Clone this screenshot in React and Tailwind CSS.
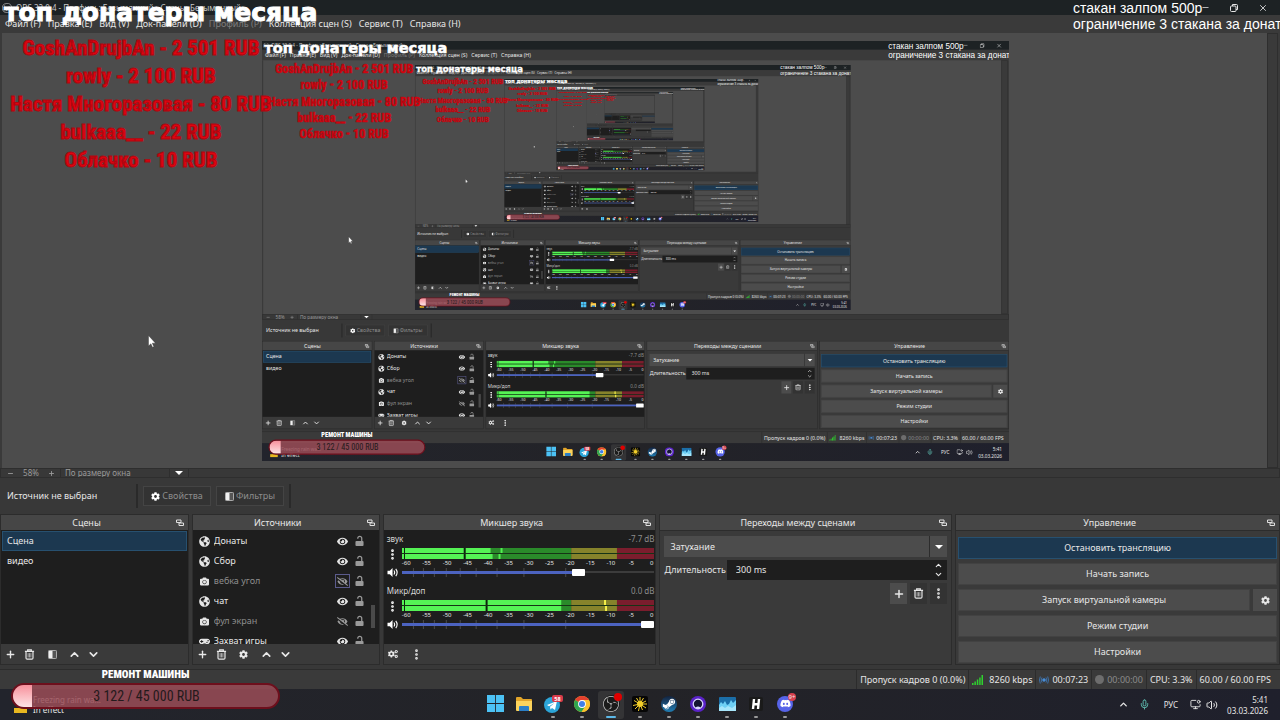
import { FaCamera, FaCog, FaCogs, FaDiscord, FaEye, FaEyeSlash, FaGamepad, FaGlobeAmericas, FaSteamSymbol } from 'react-icons/fa'
import { SiObsstudio } from 'react-icons/si'
import { ChevronDown, ChevronUp, Mic, MonitorDot, MoreVertical, Plus, Minus, Volume2, X } from 'lucide-react'

const MENU = [
  { label: 'Файл (F)' },
  { label: 'Правка (E)' },
  { label: 'Вид (V)' },
  { label: 'Док-панели (D)' },
  { label: 'Профиль (P)', disabled: true },
  { label: 'Коллекция сцен (S)' },
  { label: 'Сервис (T)' },
  { label: 'Справка (H)' },
]

const DONORS = [
  'GoshAnDrujbAn - 2 501 RUB',
  'rowly - 2 100 RUB',
  'Настя Многоразовая - 80 RUB',
  'bulkaaa__ - 22 RUB',
  'Облачко - 10 RUB',
]

const SOURCES = [
  { name: 'Донаты', icon: FaGlobeAmericas, visible: true },
  { name: 'Сбор', icon: FaGlobeAmericas, visible: true },
  { name: 'вебка угол', icon: FaCamera, visible: false, focused: true },
  { name: 'чат', icon: FaGlobeAmericas, visible: true },
  { name: 'фул экран', icon: FaCamera, visible: false },
  { name: 'Захват игры', icon: FaGamepad, visible: true },
]

const CHANNELS = [
  { name: 'звук', db: '-7.7 dB', lit: [89, 91], marks: [62], peaks: [[99, 0, '#52f152'], [97, 6, '#52f152']], volume: 71 },
  { name: 'Микр/доп', db: '0.0 dB', lit: [160, 160], marks: [84], peaks: [[203, 0, '#f4f04a'], [204, 6, '#f4f04a']], volume: 100 },
]

const DB_LABELS = [-60, -55, -50, -45, -40, -35, -30, -25, -20, -15, -10, -5, 0]
const SLIDER_TICKS = [11, 21, 32, 44, 58, 74, 95, 122, 164]

const MAX_DEPTH = 6

function TrashIcon({ className = 'size-[11px]' }) {
  return (
    <svg viewBox="0 0 12 12" className={className} fill="none" stroke="currentColor">
      <path d="M1 2.5h10M4 2V1h4v1" strokeWidth="1.3" />
      <path d="M2.2 3v6.8q0 1.2 1.2 1.2h5.2q1.2 0 1.2-1.2V3" strokeWidth="1.3" />
      <path d="M4.5 4.5v4.7M6 4.5v4.7M7.500 4.5v4.7" strokeWidth="1" opacity=".7" />
    </svg>
  )
}

function FilterIcon() {
  return (
    <svg viewBox="0 0 10 10" className="size-[9px] shrink-0">
      <rect x=".5" y=".5" width="9" height="9" rx="1" fill="#555" stroke="#bbb" />
      <rect x="1" y="1" width="4" height="8" fill="#f0f0f0" />
    </svg>
  )
}

function LockIcon() {
  return (
    <svg viewBox="0 0 10 12" className="h-[12px] w-[9px] text-[#9a9a9a]">
      <rect x="0.500" y="6" width="9" height="5.500" rx="1" fill="currentColor" />
      <path d="M7.500 6V3a2.200 2.200 0 0 0-4.400 0v.6" fill="none" stroke="currentColor" strokeWidth="1.400" />
    </svg>
  )
}

function FloatIcon() {
  return (
    <svg viewBox="0 0 8 8" className="size-[8px]" fill="none" stroke="#e0e0e0">
      <path d="M.5 3.500V1h4.500v2.500z" />
      <path d="M3 6.500V4h4.500v2.500z" fill="#464646" />
    </svg>
  )
}

function SpeakerIcon() {
  return (
    <svg viewBox="0 0 13 12" className="h-[11px] w-[12px]" fill="none" stroke="white" strokeWidth="1.200">
      <path d="M.5 4v4h2.500l3 3V1L3 4z" fill="white" stroke="none" />
      <path d="M7.500 3.800q1.600 2.200 0 4.400M9.500 2q3 4 0 8" />
    </svg>
  )
}

function IconButton({ label, children }) {
  return (
    <button aria-label={label} className="flex size-[11px] items-center justify-center text-[#e8e8e8]">
      {children}
    </button>
  )
}

function Dock({ title, children, footer }) {
  return (
    <section className="flex min-w-0 flex-col border border-[#2c2c2c] bg-[#3a3a3a]">
      <header className="grid h-[15px] shrink-0 grid-cols-[1fr_16px] items-center bg-[#464646]">
        <h2 className="text-center">{title}</h2>
        <button aria-label="Открепить" className="flex justify-center">
          <FloatIcon />
        </button>
      </header>
      {children}
      {footer && <footer className="flex h-5 shrink-0 items-center px-[4px]">{footer}</footer>}
    </section>
  )
}

function ListButtons({ middle }) {
  return (
    <div className="flex items-center gap-2">
      <IconButton label="Добавить"><Plus size={11} strokeWidth={3} /></IconButton>
      <IconButton label="Удалить"><TrashIcon /></IconButton>
      <span className="flex w-[18px] justify-center">{middle}</span>
      <IconButton label="Выше"><ChevronUp className="size-[13px] shrink-0" strokeWidth={3} /></IconButton>
      <IconButton label="Ниже"><ChevronDown className="size-[13px] shrink-0" strokeWidth={3} /></IconButton>
    </div>
  )
}

function SceneDock() {
  return (
    <Dock
      title="Сцены"
      footer={<ListButtons middle={<IconButton label="Фильтры сцены"><FilterIcon /></IconButton>} />}
    >
      <ul className="min-h-0 flex-1 bg-[#1e1e1e] px-px pt-px">
        <li className="flex h-5 items-center border border-[#27506f] bg-[#1c3850] px-1">Сцена</li>
        <li className="flex h-5 items-center px-[5px]">видео</li>
      </ul>
    </Dock>
  )
}

function SourceDock() {
  return (
    <Dock
      title="Источники"
      footer={<ListButtons middle={<IconButton label="Свойства источника"><FaCog size={9} /></IconButton>} />}
    >
      <div className="flex min-h-0 flex-1 overflow-hidden bg-[#1e1e1e]">
        <ul className="min-w-0 flex-1 pt-px pl-[6px]">
          {SOURCES.map(({ name, icon: Icon, visible, focused }) => (
            <li key={name} className="flex h-5 items-center">
              <Icon className={Icon === FaCamera ? 'mx-px size-[9px]' : 'size-[11px]'} />
              <span className={visible ? 'ml-[4px] flex-1 truncate' : 'ml-[4px] flex-1 truncate text-[#8d8d8d]'}>
                {name}
              </span>
              <button
                aria-label="Видимость"
                className={
                  focused
                    ? 'flex h-[14px] w-[15px] items-center justify-center border border-[#5b5b8c] text-[#9a9a9a]'
                    : 'flex h-[14px] w-[15px] items-center justify-center'
                }
              >
                {visible ? <FaEye size={11} /> : <FaEyeSlash size={11} className="text-[#9a9a9a]" />}
              </button>
              <button aria-label="Блокировка" className="ml-[5px]">
                <LockIcon />
              </button>
            </li>
          ))}
        </ul>
        <div className="flex w-[15px] flex-col items-center justify-end pr-px pb-4 pl-1">
          <div className="h-[23px] w-1 bg-[#4a4a4a]" />
        </div>
      </div>
    </Dock>
  )
}

function Meter({ lit, marks, peaks }) {
  return (
    <svg viewBox="0 0 254 11" preserveAspectRatio="none" className="block h-[11px] w-full">
      {lit.map((end, i) => (
        <g key={i}>
          <rect x="0" y={i * 6} width="170" height="5" fill="#2a8a2a" />
          <rect x="170" y={i * 6} width="46" height="5" fill="#86832b" />
          <rect x="216" y={i * 6} width="38" height="5" fill="#7b1d2d" />
          <rect x="0" y={i * 6} width={end} height="5" fill="#55f355" />
        </g>
      ))}
      {peaks.map(([x, y, fill]) => (
        <rect key={x} x={x} y={y} width="2" height="5" fill={fill} />
      ))}
      {marks.map((x) => (
        <rect key={x} x={x} y="0" width="2" height="11" fill="#0d200d" />
      ))}
      <rect x="2" y="0" width="1" height="11" fill="#0d200d" />
      <rect x="0" y="5" width="254" height="1" fill="#143a14" opacity=".8" />
    </svg>
  )
}

function Channel({ channel }) {
  return (
    <div className="flex h-[52px] shrink-0 flex-col">
      <div className="flex h-[18px] items-center justify-between text-[8px]">
        <span className="text-[#d8d8d8]">{channel.name}</span>
        <span className="text-[8px] text-[#8d8d8d]">{channel.db}</span>
      </div>
      <div className="grid grid-cols-[15px_1fr]">
        <button aria-label="Меню канала" className="flex items-start">
          <MoreVertical className="-ml-px size-[13px] text-white" strokeWidth={3} />
        </button>
        <div className="h-[19px]">
          <Meter {...channel} />
          <div className="-mr-[2px] flex h-2 items-center justify-between text-[6px] leading-[8px] text-[#e4e4e4]">
            {DB_LABELS.map((db) => (
              <span key={db} className="flex w-[9px] justify-center">{db}</span>
            ))}
          </div>
        </div>
        <button aria-label="Без звука">
          <SpeakerIcon />
        </button>
        <div className="grid h-[11px] items-center">
          <svg viewBox="0 0 254 11" preserveAspectRatio="none" className="col-start-1 row-start-1 h-[11px] w-full">
            {SLIDER_TICKS.map((x) => (
              <rect key={x} x={x} y="1" width="1" height="9" fill="#4c4c4c" />
            ))}
            <rect x="0" y="4" width="254" height="2" fill="#3c3c3c" />
            <rect x="0" y="4" width={channel.volume * 2.5} height="3" fill="#4c63c0" />
          </svg>
          <input
            type="range"
            aria-label={'Громкость ' + channel.name}
            defaultValue={channel.volume}
            className="col-start-1 row-start-1 h-[9px] w-full appearance-none bg-transparent [&::-webkit-slider-thumb]:h-[7px] [&::-webkit-slider-thumb]:w-[13px] [&::-webkit-slider-thumb]:appearance-none [&::-webkit-slider-thumb]:rounded-[1px] [&::-webkit-slider-thumb]:bg-white"
          />
        </div>
      </div>
    </div>
  )
}

function MixerDock() {
  return (
    <Dock
      title="Микшер звука"
      footer={
        <div className="flex gap-3">
          <IconButton label="Расширенные свойства"><FaCogs size={10} /></IconButton>
          <IconButton label="Меню"><MoreVertical size={13} strokeWidth={3} className="shrink-0" /></IconButton>
        </div>
      }
    >
      <div className="min-h-0 flex-1 overflow-hidden bg-[#1e1e1e] pr-px pl-[3px]">
        {CHANNELS.map((channel) => (
          <Channel key={channel.name} channel={channel} />
        ))}
      </div>
    </Dock>
  )
}

function TransitionDock() {
  return (
    <Dock title="Переходы между сценами">
      <div className="flex flex-col gap-[3px] border-t border-[#2c2c2c] px-1 pt-[5px]">
        <div className="grid h-[21px] items-center bg-[#4c4c4c]">
          <select
            aria-label="Переход"
            className="col-start-1 row-start-1 h-full w-full appearance-none bg-transparent pl-[6px] outline-none"
          >
            <option>Затухание</option>
          </select>
          <span className="pointer-events-none col-start-1 row-start-1 flex h-full w-[18px] items-center justify-center justify-self-end border-l border-[#2c2c2c]">
            <span className="border-x-4 border-t-4 border-x-transparent border-t-white" />
          </span>
        </div>
        <label className="flex h-5 items-center gap-px">
          Длительность
          <span className="flex h-full min-w-0 flex-1 items-center bg-[#1e1e1e] pr-1">
            <input defaultValue="300 ms" className="w-full min-w-0 flex-1 bg-transparent pl-[9px] outline-none" />
            <span className="flex flex-col">
              <ChevronUp size={9} strokeWidth={3} />
              <ChevronDown size={9} strokeWidth={3} />
            </span>
          </span>
        </label>
        <div className="flex justify-end gap-[3px]">
          <button aria-label="Добавить переход" className="flex h-[21px] w-[17px] items-center justify-center bg-[#4c4c4c]">
            <Plus size={12} strokeWidth={3} />
          </button>
          <button aria-label="Удалить переход" className="flex h-[21px] w-[17px] items-center justify-center bg-[#333]">
            <TrashIcon />
          </button>
          <button aria-label="Ещё" className="flex h-[21px] w-[17px] items-center justify-center bg-[#333]">
            <MoreVertical size={13} strokeWidth={3} />
          </button>
        </div>
      </div>
    </Dock>
  )
}

function ControlsDock() {
  const button = 'h-[22px] w-full border border-[#424242] bg-[#4c4c4c]'
  return (
    <Dock title="Управление">
      <div className="flex flex-col gap-1 border-t border-[#2c2c2c] px-[2px] pt-[6px]">
        <button className="h-[22px] border border-[#27506f] bg-[#1c3850]">Остановить трансляцию</button>
        <button className={button}>Начать запись</button>
        <div className="flex gap-[3px]">
          <button className={button}>Запуск виртуальной камеры</button>
          <button aria-label="Настройки камеры" className="flex h-[22px] w-6 shrink-0 items-center justify-center bg-[#4c4c4c]">
            <FaCog size={9} />
          </button>
        </div>
        <button className={button}>Режим студии</button>
        <button className={button}>Настройки</button>
      </div>
    </Dock>
  )
}

function StatusBar() {
  const cell = 'flex h-full items-center gap-[3px] border-l border-[#2c2c2c] px-[3px]'
  return (
    <div className="mt-1 flex h-5 shrink-0 items-center justify-end border-t border-[#2c2c2c] bg-[#3a3a3a] pr-[6px]">
      <span className={cell}>Пропуск кадров 0 (0.0%)</span>
      <span className={cell}>
        <svg viewBox="0 0 11 10" className="mr-[3px] h-[10px] w-[11px]" fill="#2fd12f">
          <path d="M0 8h1.500v2H0zM2.400 6.500h1.500V10H2.400zM4.800 4.500h1.500V10H4.800zM7.200 2.500h1.500V10H7.200zM9.500 0H11v10H9.500z" />
        </svg>
        8260 kbps
      </span>
      <span className={cell}>
        <svg viewBox="0 0 10 8" className="h-2 w-[10px]" fill="none" stroke="#3f7fc4">
          <circle cx="5" cy="4" r="1.300" fill="#5aa0e8" />
          <path d="M3 1.500q-1.600 2.500 0 5M7 1.500q1.600 2.500 0 5M1.300.5q-1.600 3.500 0 7M8.700.5q1.600 3.500 0 7" strokeWidth=".8" />
        </svg>
        00:07:23
      </span>
      <span className={cell + ' text-[#8a8a8a]'}>
        <span className="size-[9px] rounded-full bg-[#6d6d6d]" />
        00:00:00
      </span>
      <span className={cell}>CPU: 3.3%</span>
      <span className={cell}>60.00 / 60.00 FPS</span>
    </div>
  )
}

function WindowsLogo() {
  return (
    <svg viewBox="0 0 16 16" className="size-[17px]" fill="#4cc2f5">
      <path d="M0 0h7.600v7.600H0zM8.400 0H16v7.600H8.400zM0 8.400h7.600V16H0zM8.400 8.400H16V16H8.400z" />
    </svg>
  )
}

function FolderLogo() {
  return (
    <svg viewBox="0 0 18 16" className="h-[16px] w-[18px]">
      <path d="M1 2q0-1 1-1h4l2 2h8q1 0 1 1v10H1z" fill="#e2a52a" />
      <path d="M1 5h16v9q0 1-1 1H2q-1 0-1-1z" fill="#fbd35c" />
      <path d="M4 15v-4q0-1 1-1h8q1 0 1 1v4z" fill="#2b7fc7" />
    </svg>
  )
}

function TelegramLogo() {
  return (
    <svg viewBox="0 0 20 18" className="h-[18px] w-5">
      <circle cx="9" cy="10" r="8" fill="#2ca5d8" />
      <path d="M4 10l10-4-2 9-3-2-1.500 1.500-.5-2.800 4.500-3.700-5.500 3.200z" fill="white" />
      <rect x="9" y="0" width="11" height="7" rx="2" fill="#d83b4b" />
      <text x="14.500" y="5.500" fontSize="5.500" fontWeight="700" textAnchor="middle" fill="white">58</text>
    </svg>
  )
}

function ChromeLogo() {
  return (
    <svg viewBox="0 0 16 16" className="size-4">
      <circle cx="8" cy="8" r="8" fill="#f9c12e" />
      <path d="M8 8L1.100 4A8 8 0 0 1 14.900 4z" fill="#e5402f" />
      <path d="M8 8L1.100 4A8 8 0 0 0 7.600 16l4-6z" fill="#2fa54f" />
      <path d="M8 4h6.900a8 8 0 0 1-7.300 12l4-6z" fill="#f9c12e" />
      <circle cx="8" cy="8" r="3.900" fill="white" />
      <circle cx="8" cy="8" r="3" fill="#3f7fe8" />
    </svg>
  )
}

function ObsLogo() {
  return (
    <span className="relative flex size-[17px] items-center justify-center rounded-full bg-[#1b1b1b]">
      <SiObsstudio size={16} className="text-[#c8c8c8]" />
      <span className="absolute -top-[2px] -right-[2px] size-2 rounded-full bg-[#e00000]" />
    </span>
  )
}

function SunLogo() {
  return (
    <svg viewBox="0 0 16 16" className="size-4">
      <rect width="16" height="16" rx="2" fill="#060606" />
      <path d="M8 8L8 1M8 8l3.500-6M8 8l6-3M8 8h7M8 8l6 4M8 8l2.500 6M8 8l-1.500 7M8 8l-5 5M8 8l-7 1.500M8 8L2 4.500M8 8L4.500 2" stroke="#f3cf2b" strokeWidth="1" />
      <circle cx="8" cy="8" r="3" fill="#f3cf2b" />
    </svg>
  )
}

function SteamLogo() {
  return (
    <span className="flex size-4 items-center justify-center rounded-full bg-linear-to-b from-[#12233f] to-[#1f7fb5]">
      <FaSteamSymbol size={14} className="text-white" />
    </span>
  )
}

function RingLogo() {
  return (
    <svg viewBox="0 0 16 16" className="size-4">
      <circle cx="8" cy="8" r="8" fill="#5a22c8" />
      <circle cx="8" cy="8" r="4.800" fill="#141432" stroke="#d8d4ff" strokeWidth="1.300" />
      <path d="M5.500 11.500q2.500-2 5 0l-1 1.500h-3z" fill="#d8d4ff" />
    </svg>
  )
}

function ChartLogo() {
  return (
    <svg viewBox="0 0 17 14" className="h-[14px] w-[17px]">
      <rect width="17" height="14" rx="1" fill="#1b6ea8" />
      <path d="M0 8l2-3 2 2 2-3 2 4 2-1 2-4 2 3 3-3v11H0z" fill="#6fd0f5" />
      <path d="M0 11l3-2 3 2 3-2 4 2 4-3v6H0z" fill="#a8e6fb" />
    </svg>
  )
}

function HLogo() {
  return (
    <svg viewBox="0 0 14 14" className="size-[14px]">
      <rect width="14" height="14" rx="2" fill="#1a1a1a" />
      <path d="M5 2L4 12M10 2L9 12M4 7.200h6" stroke="white" strokeWidth="2.400" />
    </svg>
  )
}

function DiscordLogo() {
  return (
    <span className="relative flex size-4 items-center justify-center rounded-full bg-[#5663e8]">
      <FaDiscord size={11} className="text-white" />
      <span className="absolute -top-[3px] -right-[3px] flex size-2 items-center justify-center rounded-full bg-[#d8404f] text-[6px] leading-none">9+</span>
    </span>
  )
}

const APPS = [
  { name: 'Пуск', logo: WindowsLogo },
  { name: 'Проводник', logo: FolderLogo },
  { name: 'Telegram', logo: TelegramLogo, running: true },
  { name: 'Chrome', logo: ChromeLogo, running: true },
  { name: 'OBS', logo: ObsLogo, active: true },
  { name: 'Sun', logo: SunLogo, running: true },
  { name: 'Steam', logo: SteamLogo, running: true },
  { name: 'Ring', logo: RingLogo, running: true },
  { name: 'Монитор', logo: ChartLogo, running: true },
  { name: 'H', logo: HLogo, running: true },
  { name: 'Discord', logo: DiscordLogo, running: true },
]

function Taskbar() {
  return (
    <div className="grid h-[31px] shrink-0 grid-cols-[1fr_auto_1fr] items-center bg-linear-to-r from-[#22242c] via-[#232327] to-[#1f202c]">
      <div className="flex items-end gap-[6px] pl-[14px] text-[8px] leading-[10px]">
        <span className="mb-[2px] h-[5px] w-[13px] bg-[#e8b820]" />
        <p>
          Freezing rain wa...
          <br />
          In effect
        </p>
      </div>
      <div className="flex gap-[3px]">
        {APPS.map(({ name, logo: Logo, running, active }) => (
          <button
            key={name}
            aria-label={name}
            className={
              active
                ? 'flex h-7 w-[26px] flex-col items-center justify-end rounded-[3px] bg-[#343436]'
                : 'flex h-7 w-[26px] flex-col items-center justify-end'
            }
          >
            <span className="flex h-[22px] items-center">
              <Logo />
            </span>
            <span
              className={
                active
                  ? 'my-px h-[2px] w-[10px] rounded-full bg-[#5cb8e8]'
                  : running
                    ? 'my-px h-[2px] w-1 rounded-full bg-[#9a9a9a]'
                    : 'my-px h-[2px] w-1'
              }
            />
          </button>
        ))}
      </div>
      <div className="flex items-center justify-end pr-3">
        <ChevronUp size={11} strokeWidth={3} className="mr-[10px]" />
        <Mic size={11} className="mr-[14px] text-[#62c5b8]" />
        <span className="mr-[12px] text-[8px]">РУС</span>
        <MonitorDot size={11} className="mr-[5px]" />
        <Volume2 size={12} className="mr-[9px]" />
        <p className="text-right text-[8px] leading-[11px]">
          5:41
          <br />
          03.03.2026
        </p>
      </div>
    </div>
  )
}

// Widgets that are drawn on top of everything on the stream
function StreamOverlay() {
  return (
    <div className="pointer-events-none absolute inset-0 overflow-hidden">
      <h1 className="absolute top-0 left-1 font-['DejaVu_Sans',sans-serif] text-[25px] leading-[26px] font-bold whitespace-nowrap text-white [-webkit-text-stroke:1px_white]">
        топ донатеры месяца
      </h1>
      <ol className="absolute top-[34px] left-0 w-[282px] text-center font-['Roboto_Condensed',Roboto,sans-serif] text-[21px] leading-[28px] font-bold whitespace-nowrap text-[#e00410] [-webkit-text-stroke:1px_#b0060f]">
        {DONORS.map((donor) => (
          <li key={donor}>{donor}</li>
        ))}
      </ol>
      <p className="absolute top-0 left-[1073px] font-['Liberation_Sans',sans-serif] text-[14px] leading-[16px] whitespace-nowrap text-white">
        стакан залпом 500р
        <br />
        ограничение 3 стакана за донат
      </p>
      <div className="absolute bottom-[11px] left-[11px] flex w-[269px] flex-col items-center font-['Roboto_Condensed',Roboto,sans-serif]">
        <span className="text-[11px] leading-[16px] font-black text-white">РЕМОНТ МАШИНЫ</span>
        <div className="flex h-[26px] w-full items-center overflow-hidden rounded-full border-2 border-[#6d0f1c] bg-[#9a4c57]/85">
          <div className="h-full w-[19px] shrink-0 bg-linear-to-b from-[#f6909c] to-[#fbe4e6]" />
          <span className="flex-1 pr-[17px] text-center text-[14px] text-[#241a1c]">3 122 / 45 000 RUB</span>
        </div>
      </div>
      <svg viewBox="0 0 8 13" className="absolute top-[335px] left-[148px] h-[13px] w-2">
        <path d="M.5.5v10.500l2.400-2.200 1.600 3.500 1.400-.6-1.600-3.500h3.200z" fill="white" stroke="#333" strokeWidth=".4" />
      </svg>
    </div>
  )
}

function Preview({ depth }) {
  return (
    <div className="flex min-h-0 flex-1 border-l-2 border-[#3a3a3a] bg-[#4c4c4c]">
      <div className="flex min-w-0 flex-1 items-center justify-center pl-px">
        <div inert className="h-[420px] w-[747px] shrink-0 overflow-hidden">
          {depth < MAX_DEPTH && (
            <div className="h-[720px] w-[1280px] origin-top-left scale-[0.5836]">
              <Desktop depth={depth + 1} />
            </div>
          )}
        </div>
      </div>
      <div className="w-[11px] border border-[#2e2e2e] bg-[#3a3a3a]" />
      <div className="w-[2px] bg-[#3a3a3a]" />
    </div>
  )
}

function Desktop({ depth = 0 }) {
  return (
    <div className="relative flex h-full flex-col overflow-hidden bg-[#383838] font-['Noto_Sans',sans-serif] text-[9px] leading-[12px] text-[#e6e6e6]">
      <div className="flex h-[15px] shrink-0 items-center justify-between bg-[#1d2224] pr-3 pl-[2px]">
        <div className="flex items-center gap-1 text-[8px] text-[#c8c8c8]">
          <SiObsstudio size={10} />
          OBS 32.0.4 - Профиль: Безымянный - Сцены: Безымянный
        </div>
        <div className="flex items-center gap-5">
          <button aria-label="Свернуть"><Minus size={9} /></button>
          <button aria-label="Восстановить">
            <svg viewBox="0 0 8 8" className="size-2" fill="none" stroke="currentColor">
              <rect x=".5" y="2" width="5.500" height="5.500" rx="1" />
              <path d="M2.500 2V.5h4q1 0 1 1v4H6" />
            </svg>
          </button>
          <button aria-label="Закрыть"><X size={10} /></button>
        </div>
      </div>

      <nav className="flex h-[18px] shrink-0 items-center gap-[7px] bg-[#3a3a3a] px-[5px]">
        {MENU.map(({ label, disabled }) => (
          <button key={label} disabled={disabled} className="whitespace-nowrap disabled:text-[#7d7d7d]">
            {label}
          </button>
        ))}
      </nav>

      <Preview depth={depth} />

      <div className="flex h-[10px] shrink-0 items-center border border-[#2e2e2e] text-[8px] leading-[8px] text-[#9a9a9a]">
        <button aria-label="Отдалить" className="flex w-[18px] justify-center"><Minus size={7} strokeWidth={3} /></button>
        <span className="w-6 text-center">58%</span>
        <button aria-label="Приблизить" className="flex w-[17px] justify-center"><Plus size={7} strokeWidth={3} /></button>
        <select aria-label="Масштаб" className="h-2 w-[110px] appearance-none border-x border-[#2e2e2e] pl-[4px] outline-none">
          <option>По размеру окна</option>
        </select>
        <span className="flex h-2 w-[19px] items-center justify-center border-r border-[#2e2e2e]">
          <span className="border-x-4 border-t-4 border-x-transparent border-t-white" />
        </span>
      </div>

      <div className="flex h-9 shrink-0 items-center">
        <span className="w-[136px] pl-[7px]">Источник не выбран</span>
        <span className="h-6 w-[2px] bg-[#2a2a2a]" />
        <button className="ml-[5px] flex h-5 w-[68px] items-center justify-center gap-[2px] border border-[#444] bg-[#333] text-[#8d8d8d]">
          <FaCog size={9} className="text-white" />
          Свойства
        </button>
        <button className="mx-[5px] flex h-5 w-[68px] items-center justify-center gap-[2px] border border-[#444] bg-[#333] text-[#8d8d8d]">
          <FilterIcon />
          Фильтры
        </button>
        <span className="h-6 w-[2px] bg-[#2a2a2a]" />
      </div>

      <div className="grid h-[151px] shrink-0 grid-cols-[189fr_188fr_274fr_293fr_325fr] grid-rows-[minmax(0,1fr)] gap-[3px]">
        <SceneDock />
        <SourceDock />
        <MixerDock />
        <TransitionDock />
        <ControlsDock />
      </div>

      <StatusBar />
      <Taskbar />
      <StreamOverlay />
    </div>
  )
}

export default function App() {
  return (
    <main className="h-screen">
      <Desktop />
    </main>
  )
}
